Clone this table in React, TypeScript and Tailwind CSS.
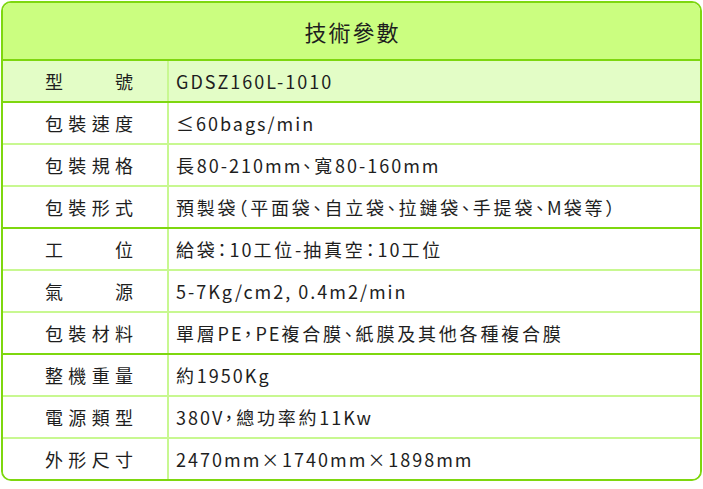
import React from "react";

type Row = { label: string[]; value: string; thick?: boolean; bg?: string };

const rows: Row[] = [
  { label: ["型", "號"], value: "GDSZ160L-1010", thick: true, bg: "bg-[#e3fdc6]" },
  { label: ["包", "裝", "速", "度"], value: "≤60bags/min" },
  { label: ["包", "裝", "規", "格"], value: "長80-210mm、寬80-160mm" },
  { label: ["包", "裝", "形", "式"], value: "預製袋（平面袋、自立袋、拉鏈袋、手提袋、M袋等）", thick: true },
  { label: ["工", "位"], value: "給袋：10工位-抽真空：10工位" },
  { label: ["氣", "源"], value: "5-7Kg/cm2, 0.4m2/min" },
  { label: ["包", "裝", "材", "料"], value: "單層PE，PE複合膜、紙膜及其他各種複合膜", thick: true },
  { label: ["整", "機", "重", "量"], value: "約1950Kg" },
  { label: ["電", "源", "類", "型"], value: "380V，總功率約11Kw" },
  { label: ["外", "形", "尺", "寸"], value: "2470mm×1740mm×1898mm" },
];

function Value({ text }: { text: string }) {
  const parts = text.match(/[\u3000-\u9fff\uff00-\uffef×]+|[^\u3000-\u9fff\uff00-\uffef×]+/g) ?? [];
  return (
    <>
      {parts.map((p, i) =>
        /[\u3000-\u9fff\uff00-\uffef×]/.test(p) ? (
          <span key={i} className="tracking-[2.8px]">{p}</span>
        ) : (
          <span key={i} className="tracking-[2px]">{p}</span>
        )
      )}
    </>
  );
}

export default function App() {
  return (
    <div
      lang="zh-Hant"
      className="w-[703px] h-[489px] bg-white pt-px pl-px"
      style={{ fontFamily: '"Noto Sans CJK TC", "Noto Sans", sans-serif' }}
    >
      <div className="w-[701px] border-2 border-[#7ed70f] rounded-[10px] overflow-hidden text-[#1e1e1e]">
        <div className="h-[58px] bg-[#cbfe80] border-b-2 border-[#7ed70f] flex items-center justify-center text-[22px] tracking-[2px] pl-[2px]">
          技術參數
        </div>
        {rows.map((r, i) => {
          const last = i === rows.length - 1;
          const border = last
            ? ""
            : r.thick
            ? "border-b-2 border-[#7ed70f]"
            : "border-b-2 border-[#c8f891]";
          return (
            <div key={i} className={`flex ${last ? "h-[40px]" : "h-[42px]"} ${border} ${r.bg ?? "bg-white"}`}>
              <div className="w-[166px] shrink-0 border-r-2 border-[#c8f891] flex items-center pl-[42px]">
                <div className="w-[88px] flex justify-between text-[18px] leading-none">
                  {r.label.map((c, j) => (
                    <span key={j}>{c}</span>
                  ))}
                </div>
              </div>
              <div className="flex items-center pl-[7px] text-[18px] whitespace-nowrap [font-feature-settings:'halt']">
                <span>
                  <Value text={r.value} />
                </span>
              </div>
            </div>
          );
        })}
      </div>
    </div>
  );
}
